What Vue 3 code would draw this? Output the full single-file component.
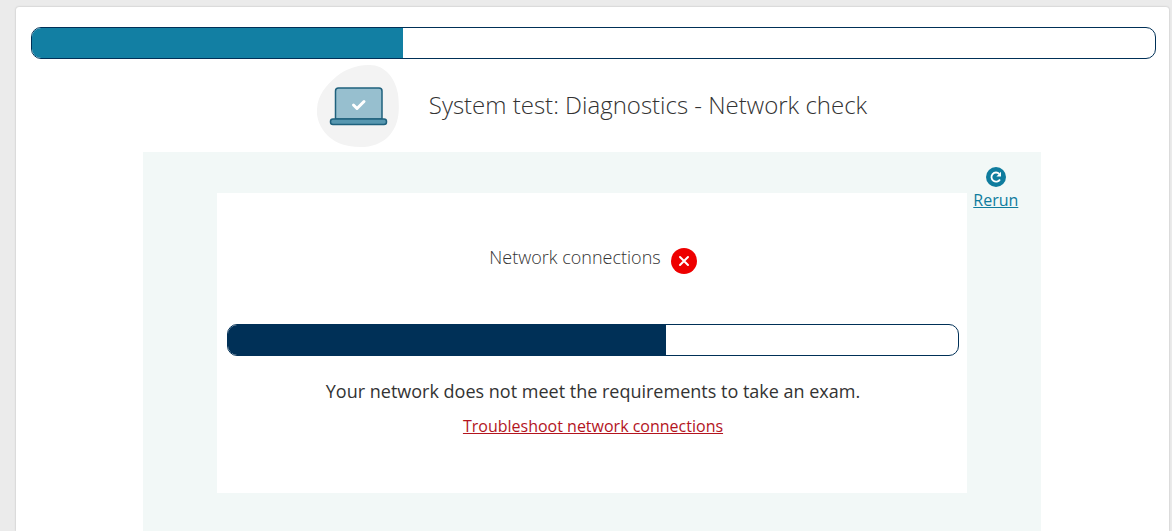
<script setup>
import { ref } from 'vue'

const overall = ref(33)
const network = ref(60)

function rerun() {
  network.value = 60
}
</script>

<template>
  <div class="page">
    <main class="sheet">
      <div class="progress" role="progressbar" aria-label="System test progress" :aria-valuenow="overall" aria-valuemin="0" aria-valuemax="100">
        <div class="fill teal" :style="{ width: overall + '%' }"></div>
      </div>

      <div class="content">
        <header class="heading">
          <svg class="laptop" viewBox="0 0 82 84" aria-hidden="true">
            <path d="M51 1C66 0 78 12 81 30C83 47 82 61 72 72C62 82 48 85 32 82C15 79 2 67 0 50C-1 33 8 22 20 12C29 5 40 1 51 1Z" fill="#f3f3f3" />
            <path d="M18.500 55V27Q18.500 24 21.500 24H62Q65 24 65 27V55Z" fill="#97bfcf" stroke="#1f617d" stroke-width="1.5" />
            <rect x="13.500" y="55" width="56" height="5.5" rx="2.5" fill="#5797b0" stroke="#1f617d" stroke-width="1.5" />
            <path d="M36.500 41L40 44.500L47 37.500" fill="none" stroke="#fff" stroke-width="3" stroke-linecap="round" stroke-linejoin="round" />
          </svg>
          <h1>System test: Diagnostics - Network check</h1>
        </header>

        <section class="panel">
          <div class="result">
            <div class="status">
              <h2>Network connections</h2>
              <svg class="failed" viewBox="0 0 26 26" role="img" aria-label="Failed">
                <circle cx="13" cy="13" r="13" fill="#ee0000" />
                <path d="M9 9L17 17M17 9L9 17" stroke="#fff" stroke-width="2" stroke-linecap="round" />
              </svg>
            </div>
            <div class="progress" role="progressbar" aria-label="Network check progress" :aria-valuenow="network" aria-valuemin="0" aria-valuemax="100">
              <div class="fill navy" :style="{ width: network + '%' }"></div>
            </div>
            <p>Your network does not meet the requirements to take an exam.</p>
            <a class="help" href="#troubleshoot">Troubleshoot network connections</a>
          </div>
          <button class="rerun" type="button" @click="rerun">
            <svg viewBox="0 0 20 20" aria-hidden="true">
              <circle cx="10" cy="10" r="10" fill="#0f7c9e" />
              <path d="M14 12.500A4.600 4.600 0 1 1 13.300 6.800" fill="none" stroke="#fff" stroke-width="1.800" />
              <path d="M15 4.800V9.400H10.400Z" fill="#fff" />
            </svg>
            <span>Rerun</span>
          </button>
        </section>
      </div>
    </main>
  </div>
</template>

<style>
body {
  margin: 0;
  background: #ebebeb;
}
</style>

<style scoped>
.page {
  display: flex;
  min-height: 100vh;
  box-sizing: border-box;
  padding: 7px 3px 0 16px;
  background: #ebebeb;
  color: #333;
  font-family: "Open Sans", "Noto Sans", sans-serif;
}

.sheet {
  flex: 1;
  display: flex;
  flex-direction: column;
  box-sizing: border-box;
  padding: 20px 13px 0 15px;
  border-radius: 3px 3px 0 0;
  background: #fff;
  box-shadow: 0 0 2px rgba(0, 0, 0, 0.25);
}

.content {
  flex: 1;
  display: flex;
  flex-direction: column;
  align-items: center;
  padding-right: 3px;
}

.progress {
  width: 100%;
  height: 32px;
  box-sizing: border-box;
  overflow: hidden;
  border: 1px solid #003057;
  border-radius: 10px;
  background: #fff;
}

.fill {
  height: 100%;
}

.teal {
  background: #127fa3;
}

.navy {
  background: #003057;
}

.heading {
  display: flex;
  align-items: center;
  gap: 30px;
  padding: 5px 0 4px;
}

.laptop {
  flex: none;
  width: 82px;
  height: 84px;
}

h1,
h2,
p {
  margin: 0;
  font-weight: 300;
}

h1 {
  padding-bottom: 2px;
  font-size: 24px;
  line-height: 32px;
}

.panel {
  flex: 1;
  display: grid;
  grid-template-columns: 74px 1fr 74px;
  align-items: start;
  width: 80%;
  box-sizing: border-box;
  background: #f2f8f7;
}

.result {
  grid-column: 2;
  display: flex;
  flex-direction: column;
  align-items: center;
  height: 300px;
  box-sizing: border-box;
  margin-top: 41px;
  padding: 52px 8px 0 10px;
  background: #fff;
}

.status {
  display: flex;
  align-items: flex-end;
  gap: 10px;
  margin-bottom: 50px;
}

h2 {
  font-size: 18px;
  line-height: 24px;
  padding-bottom: 5px;
}

.failed {
  width: 26px;
  height: 26px;
}

p {
  margin-top: 22px;
  font-size: 18px;
  font-weight: 400;
  line-height: 26px;
}

.help {
  margin-top: 10px;
  color: #b3141e;
  font-size: 16px;
  line-height: 24px;
}

.rerun {
  display: flex;
  flex-direction: column;
  align-items: center;
  gap: 1px;
  margin: 15px 16px 0 0;
  padding: 0;
  border: 0;
  background: none;
  color: #0f7c9e;
  font: inherit;
  font-size: 16px;
  line-height: 24px;
  text-decoration: underline;
  cursor: pointer;
}

.rerun svg {
  width: 20px;
  height: 20px;
}
</style>
